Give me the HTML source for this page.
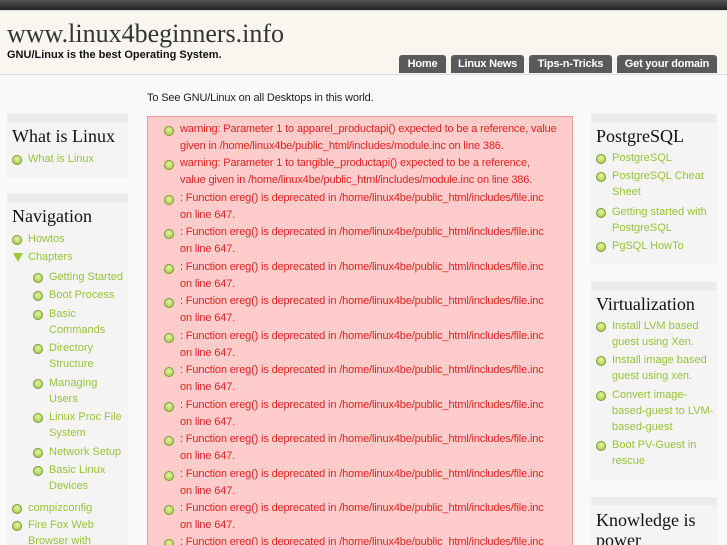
<!DOCTYPE html><html><head><meta charset="utf-8"><style>
*{margin:0;padding:0}
html,body{width:727px;height:545px;overflow:hidden}
body{background:#f8f9f8;font-family:"Liberation Sans",sans-serif;position:relative}
.a{position:absolute;white-space:nowrap}
#top{position:absolute;left:0;top:0;width:727px;height:10px;background:linear-gradient(#555,#222)}
#hd{position:absolute;left:0;top:10px;width:727px;height:63px;background:#f8f6ee;border-top:1px solid #ddd;border-bottom:1px solid #ddd}
.tab{position:absolute;top:55px;height:18px;background:#5a5a5a;color:#fff;font-size:11px;font-weight:bold;line-height:18px;text-align:center;border-radius:3px 3px 0 0;letter-spacing:-0.2px}
.box{position:absolute;background:#f3f4f3;border-top:8px solid #ebebeb}
.t{position:absolute;font-family:"Liberation Serif",serif;font-size:18px;color:#111;white-space:nowrap}
.l{position:absolute;font-size:11px;color:#99c23a;line-height:16px;white-space:nowrap}
.b{position:absolute;width:8px;height:8px;border-radius:50%;background:radial-gradient(circle at 50% 35%,#e4f3a8,#9fc83c);border:1px solid #7a9a30}
.tri{position:absolute;width:0;height:0;border-left:5px solid transparent;border-right:5px solid transparent;border-top:9px solid #9fc83c}
#err{position:absolute;left:147px;top:116px;width:424px;height:440px;background:#ffcccc;border:1px solid #e99}
.e{position:absolute;left:180px;font-size:11px;color:#d22;line-height:17px;white-space:nowrap;letter-spacing:-0.15px}
</style></head><body>
<div id="top"></div><div id="hd"></div>
<div class="a" style="left:7px;top:19px;font-family:'Liberation Serif',serif;font-size:26px;color:#333">www.linux4beginners.info</div>
<div class="a" style="left:7px;top:49px;font-size:11px;font-weight:bold;color:#111">GNU/Linux is the best Operating System.</div>
<div class="tab" style="left:399px;width:47px">Home</div>
<div class="tab" style="left:451px;width:73px">Linux News</div>
<div class="tab" style="left:529px;width:83px">Tips-n-Tricks</div>
<div class="tab" style="left:617px;width:100px">Get your domain</div>
<div class="a" style="left:147px;top:92px;font-size:11px;color:#222;letter-spacing:-0.15px">To See GNU/Linux on all Desktops in this world.</div>

<div class="box" style="left:7px;top:114px;width:121px;height:56px"></div>
<div class="box" style="left:7px;top:194px;width:121px;height:360px"></div>
<div class="box" style="left:591px;top:114px;width:126px;height:143px"></div>
<div class="box" style="left:591px;top:282px;width:126px;height:190px"></div>
<div class="box" style="left:591px;top:497px;width:126px;height:60px"></div>

<div class="t" style="left:12px;top:126px">What is Linux</div>
<div class="t" style="left:12px;top:206px">Navigation</div>
<div class="t" style="left:596px;top:126px">PostgreSQL</div>
<div class="t" style="left:596px;top:294px">Virtualization</div>
<div class="t" style="left:596px;top:510px;line-height:20px;white-space:normal;width:110px">Knowledge is power</div>

<div id="err"></div>
<script>
function L(x,y,txt,tri){y+=1;var d=document.body;var b=document.createElement('div');if(tri){b.className='tri';b.style.left=(x-15)+'px';b.style.top=(y+4)+'px';}else{b.className='b';b.style.left=(x-16)+'px';b.style.top=(y+4)+'px';}d.appendChild(b);var t=document.createElement('div');t.className='l';t.style.left=x+'px';t.style.top=y+'px';t.innerHTML=txt;d.appendChild(t);}
L(28,150,'What is Linux');L(28,230,'Howtos');L(28,248,'Chapters',1);
L(49,268,'Getting Started');L(49,286,'Boot Process');L(49,305,'Basic<br>Commands');L(49,339,'Directory<br>Structure');L(49,374,'Managing<br>Users');L(49,408,'Linux Proc File<br>System');L(49,443,'Network Setup');L(49,461,'Basic Linux<br>Devices');
L(28,499,'compizconfig');L(28,516,'Fire Fox Web<br>Browser with');
L(612,149,'PostgreSQL');L(612,167,'PostgreSQL Cheat<br>Sheet');L(612,203,'Getting started with<br>PostgreSQL');L(612,237,'PgSQL HowTo');
L(612,317,'Install LVM based<br>guest using Xen.');L(612,351,'Install image based<br>guest using xen.');L(612,386,'Convert image-<br>based-guest to LVM-<br>based-guest');L(612,436,'Boot PV-Guest in<br>rescue');
var E=['warning: Parameter 1 to apparel_productapi() expected to be a reference, value<br>given in /home/linux4be/public_html/includes/module.inc on line 386.','warning: Parameter 1 to tangible_productapi() expected to be a reference,<br>value given in /home/linux4be/public_html/includes/module.inc on line 386.'];
for(var i=0;i<13;i++){var y=121+i*34.45;var s=i<2?E[i]:': Function ereg() is deprecated in /home/linux4be/public_html/includes/file.inc<br>on line 647.';var b=document.createElement('div');b.className='b';b.style.left='164px';b.style.top=(y+5)+'px';document.body.appendChild(b);var t=document.createElement('div');t.className='e';t.style.top=y+'px';t.innerHTML=s;document.body.appendChild(t);}
</script>
</body></html>
